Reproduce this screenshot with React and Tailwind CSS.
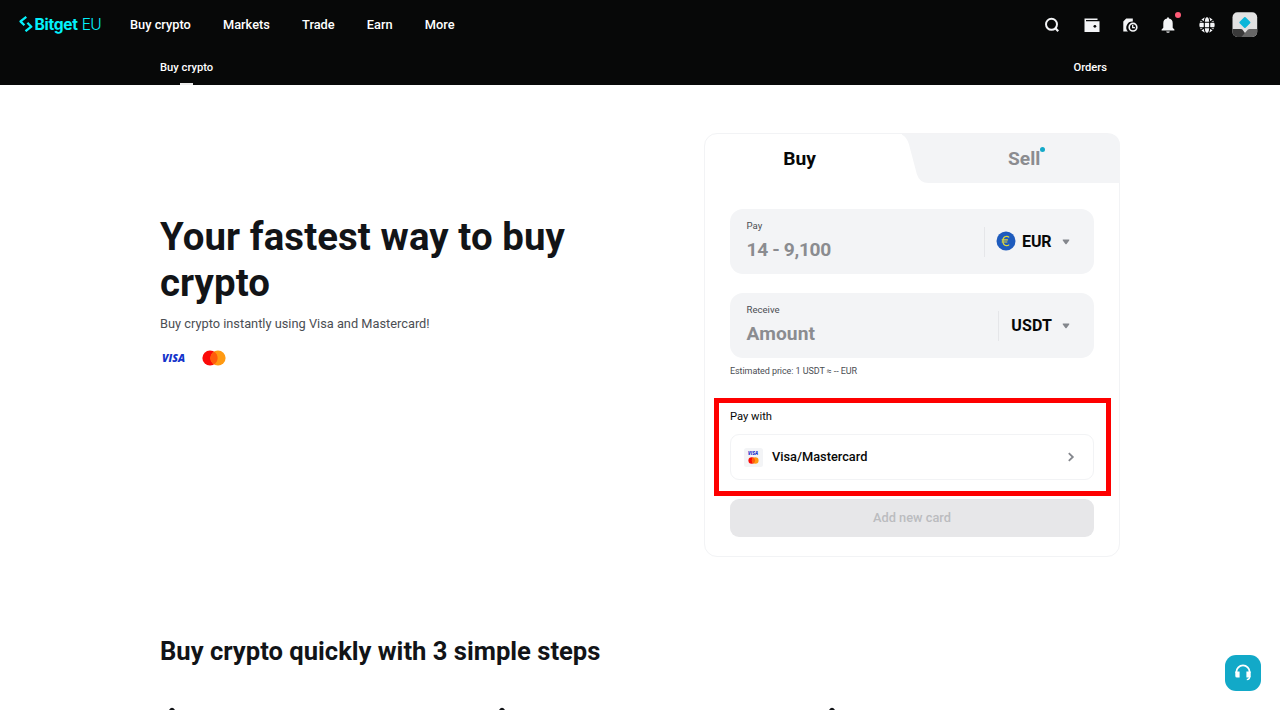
import React from "react";

const NAV = ["Buy crypto", "Markets", "Trade", "Earn", "More"];

function Logo() {
  return (
    <a className="flex h-[24px] w-[85px] items-center pl-px text-[#03f1fb]">
      <svg width="14" height="16" viewBox="0 0 14 16" fill="none" stroke="currentColor" strokeWidth="2.300" strokeLinejoin="round" className="mb-[2px] shrink-0">
        <path d="M7.300.9L1.500 5.400 5.400 9.300" />
        <path d="M6.500 15.200L12.300 10.700 8.400 6.800" />
      </svg>
      <span className="ml-[1.500px] whitespace-nowrap font-['Inter'] text-[15.600px] font-bold leading-none tracking-[-0.3px]">Bitget</span>
      <span className="ml-[4px] font-['Inter'] text-[15.600px] font-light leading-none tracking-[-0.8px]">EU</span>
    </a>
  );
}

function HeaderIcons() {
  return (
    <div className="flex items-center text-[#f4f5f7]">
      <svg width="20" height="20" viewBox="0 0 20 20" fill="none" stroke="currentColor" strokeWidth="2" className="mr-[20px]">
        <circle cx="9.500" cy="9.300" r="5.500" />
        <path d="M13.200 13l3 3.200" strokeWidth="2.200" />
      </svg>
      <svg width="20" height="20" viewBox="0 0 20 20" fill="currentColor" className="mr-[18px]">
        <path d="M2.500 3.500h13v1.500H4v1.300h13.500v10.700h-15z" />
        <circle cx="12.900" cy="11.300" r="1.400" fill="#070808" />
      </svg>
      <svg width="20" height="20" viewBox="0 0 20 20" fill="currentColor" className="mr-[18px]">
        <path d="M6.200 3.500h6.600v3.100A5.900 5.900 0 0 0 8 16.600H3.300V6.400z" />
        <circle cx="13" cy="12.200" r="3.800" fill="none" stroke="currentColor" strokeWidth="1.700" />
        <path d="M12.700 9.900v2.800h2.200" fill="none" stroke="currentColor" strokeWidth="1.300" />
      </svg>
      <span className="relative mr-[18.500px] h-5 w-5">
        <svg width="20" height="20" viewBox="0 0 20 20" fill="currentColor">
          <path d="M9.100 2.400h1.800v1.200a4.700 4.700 0 0 1 3.800 4.600v4.600l1.700 1.700v1H3.600v-1l1.700-1.700V8.200a4.700 4.700 0 0 1 3.800-4.600zM8.200 16.500h3.600a1.800 1.300 0 0 1-3.600 0z" />
        </svg>
        <span className="absolute left-[16.500px] top-[-3px] h-[6.500px] w-[6.500px] rounded-full bg-[#ff5c78]" />
      </span>
      <svg width="20" height="20" viewBox="0 0 20 20" className="mr-[15.500px]">
        <circle cx="10" cy="10" r="7.700" fill="currentColor" />
        <g fill="none" stroke="#070808" strokeWidth="1.100">
          <path d="M1.500 7.300h17M1.500 12.700h17" />
          <path d="M7.300 6.900v6.200M12.700 6.900v6.200" />
          <path d="M9 1.500Q7.300 3.500 7.200 7.300L3.800 4.700M11 1.500Q12.700 3.500 12.800 7.300L16.200 4.700M9 18.500Q7.300 16.500 7.200 12.700L3.800 15.300M11 18.500Q12.700 16.500 12.800 12.700L16.200 15.300" />
        </g>
      </svg>
      <svg width="26" height="26" viewBox="0 0 26 26">
        <defs>
          <clipPath id="avatar">
            <rect x=".5" y=".3" width="24.700" height="24.700" rx="5" />
          </clipPath>
        </defs>
        <g clipPath="url(#avatar)">
          <rect width="26" height="26" fill="#e2e2e2" />
          <path d="M0 17h9q1 0 1.600.8l2.500 3.400L10 26H0z" fill="#3a3a3a" />
          <path d="M26 17h-8.500q-1 0-1.800.8L8.500 26H26z" fill="#666" />
        </g>
        <rect x="8.700" y="6.300" width="8.400" height="8.400" rx="1" fill="#0bb6d9" transform="rotate(45 12.900 10.500)" />
      </svg>
    </div>
  );
}

function Mastercard({ className }) {
  return (
    <svg viewBox="0 0 24 16" className={className}>
      <circle cx="8" cy="8" r="7.600" fill="#fb0a08" />
      <circle cx="16" cy="8" r="7.600" fill="#ff9a12" />
      <path d="M12 1.540a7.600 7.600 0 0 1 0 12.920a7.600 7.600 0 0 1 0-12.920z" fill="#ff5b0c" />
    </svg>
  );
}

function Caret() {
  return (
    <svg width="8" height="6" viewBox="0 0 8 6" fill="#84878d">
      <path d="M1.200.6h5.600q1 .1.4.9L4.600 5q-.6.6-1.200 0L.8 1.500Q.2.7 1.200.6z" />
    </svg>
  );
}

function AmountField({ label, placeholder, spacing, children }) {
  return (
    <div className="flex h-[65px] items-center justify-between rounded-[13px] bg-[#f3f4f6] pl-[16.500px] pr-[24px]">
      <div className="flex h-full flex-col pt-[11px]">
        <span className="text-[9.600px] leading-[12px] text-[#4b4e53]">{label}</span>
        <span className={"mt-[6px] text-[19.200px] font-bold leading-[24px] text-[#8b8c90] " + spacing}>{placeholder}</span>
      </div>
      <div className="flex h-[30px] items-center border-l border-[#e5e6e9] pl-[12.500px]">{children}</div>
    </div>
  );
}

function TradeCard() {
  return (
    <section className="relative h-[424px] w-[416px] rounded-[13px] border border-[#f2f3f5] bg-white">
      <svg width="218" height="50" viewBox="0 0 218 50" className="absolute right-[-1px] top-[-1px]">
        <path d="M-6 .5H205Q218 .5 218 13.500V50H26.500Q17.500 50 14.800 41L7 11.500Q4 .5-6 .5z" fill="#f3f4f6" />
      </svg>
      <div className="relative flex h-[49px] text-[19.200px] font-bold leading-[50px]">
        <div className="w-[189px] text-center text-[#070808]">Buy</div>
        <div className="ml-[114px] w-[33px] text-[#8b8c90]">
          <span className="relative">
            Sell
            <span className="absolute right-[-5px] top-[0px] h-[5px] w-[5px] rounded-full bg-[#14a9c9]" />
          </span>
        </div>
      </div>
      <div className="flex flex-col px-[25px] pt-[26px]">
        <AmountField label="Pay" placeholder="14 - 9,100" spacing="tracking-[-0.35px]">
          <svg width="20" height="20" viewBox="0 0 20 20" className="-ml-px mb-px">
            <circle cx="10" cy="10" r="9.500" fill="#1e5bbd" />
            <path d="M13.200 6.400Q11.800 5.200 10.400 5.400C7.400 5.700 6.900 8.300 6.900 10s.6 4.300 3.500 4.600q1.600.1 2.800-1M5.700 8.800h6.200M5.700 11h5.600" fill="none" stroke="#dfd83b" strokeWidth="1.200" />
          </svg>
          <span className="ml-[6px] mr-[10.500px] text-[16px] font-bold tracking-[-0.1px] text-[#070808]">EUR</span>
          <Caret />
        </AmountField>
        <div className="h-[19px]" />
        <AmountField label="Receive" placeholder="Amount" spacing="tracking-[0.1px]">
          <span className="mr-[10px] text-[16px] font-bold tracking-[0.15px] text-[#070808]">USDT</span>
          <Caret />
        </AmountField>
        <p className="mt-[7px] text-[9px] leading-[12px] tracking-[-0.08px] text-[#4b4e53]">Estimated price: 1 USDT ≈ -- EUR</p>
        <div className="relative mt-[33px] flex flex-col">
          <p className="text-[11.200px] leading-[14px] text-[#070808]">Pay with</p>
          <button className="mt-[10px] flex h-[46px] items-center rounded-[9px] border border-[#f2f3f5] pl-[12.500px] pr-[17px]">
            <span className="flex h-[19px] w-[19px] flex-col items-center justify-center rounded-[2.500px] bg-[#f3f4f6]">
              <span className="font-['Open_Sans'] text-[4.500px] font-extrabold italic leading-[6px] text-[#1d35cc]">VISA</span>
              <Mastercard className="mt-[1px] h-[7px] w-[11px]" />
            </span>
            <span className="ml-[9.500px] text-[12.800px] font-medium text-[#070808]">Visa/Mastercard</span>
            <svg width="10" height="10" viewBox="0 0 10 10" fill="none" stroke="#84878d" strokeWidth="1.800" className="ml-auto">
              <path d="M2.800 1.200L6.800 5 2.800 8.800" />
            </svg>
          </button>
          <div className="pointer-events-none absolute left-[-16px] top-[-12.500px] h-[98px] w-[397px] border-[5px] border-[#fe0000]" />
        </div>
        <button className="mt-[19px] h-[38px] rounded-[9px] bg-[#e7e7e9] text-[12.800px] font-medium text-[#bbbcbf]">Add new card</button>
      </div>
    </section>
  );
}

export default function App() {
  return (
    <div className="relative h-[710px] w-[1280px] overflow-hidden bg-white font-['Roboto',sans-serif]">
      <header className="h-[85px] bg-[#070808] text-white">
        <div className="flex h-[49px] items-center justify-between pl-[18px] pr-[22px]">
          <div className="flex items-center">
            <Logo />
            <nav className="ml-[27px] flex gap-[32.200px] text-[12.800px] font-medium">
              {NAV.map((n) => (
                <a key={n}>{n}</a>
              ))}
            </nav>
          </div>
          <HeaderIcons />
        </div>
        <div className="flex h-[36px] justify-between pl-[160px] pr-[173px] text-[11.200px] font-medium">
          <a className="flex flex-col items-center justify-between pt-[10px]">
            <span className="leading-[17px]">Buy crypto</span>
            <span className="h-[2.500px] w-[13px] bg-[#ececec]" />
          </a>
          <a className="pt-[10px] leading-[17px]">Orders</a>
        </div>
      </header>

      <main className="flex h-[472px] justify-between px-[160px] pt-[48px]">
        <div className="w-[450px] pt-[81px]">
          <h1 className="text-[38.400px] font-bold leading-[46px] tracking-[0.1px] text-[#121417]">Your fastest way to buy crypto</h1>
          <p className="mt-[10px] text-[12.800px] leading-[16px] text-[#4b4e53]">Buy crypto instantly using Visa and Mastercard!</p>
          <div className="mt-[18px] flex h-[16px] items-center">
            <span className="w-[42px] pl-[2px] pt-px font-['Open_Sans'] text-[10.500px] font-extrabold italic leading-none text-[#1434cb]">VISA</span>
            <Mastercard className="h-[16px] w-[24px]" />
          </div>
        </div>
        <TradeCard />
      </main>

      <section className="px-[160px] pt-[79px]">
        <h2 className="text-[25.600px] font-bold leading-[31px] text-[#121417]">Buy crypto quickly with 3 simple steps</h2>
        <div className="mt-[40px] flex gap-[324px] pl-[9px]">
          {[0, 1, 2].map((i) => (
            <svg key={i} width="6" height="3" viewBox="0 0 6 3" fill="#121417">
              <path d="M0 3Q3-1.500 6 3z" />
            </svg>
          ))}
        </div>
      </section>

      <button className="absolute left-[1225px] top-[655px] flex h-[36px] w-[36px] items-center justify-center rounded-[11px] bg-[#12a9c8]">
        <svg width="20" height="20" viewBox="0 0 20 20" fill="none" stroke="white" strokeWidth="1.800">
          <path d="M3.400 10V9a6.600 6.600 0 0 1 13.200 0v1" />
          <path d="M2.300 8.500h4.300v6H4Q2.300 14.500 2.300 13zM17.700 8.500h-4.300v6H16Q17.700 14.500 17.700 13z" fill="white" stroke="none" />
          <path d="M16.800 13q0 3.500-3 3.600" strokeWidth="1.500" />
        </svg>
      </button>
    </div>
  );
}
